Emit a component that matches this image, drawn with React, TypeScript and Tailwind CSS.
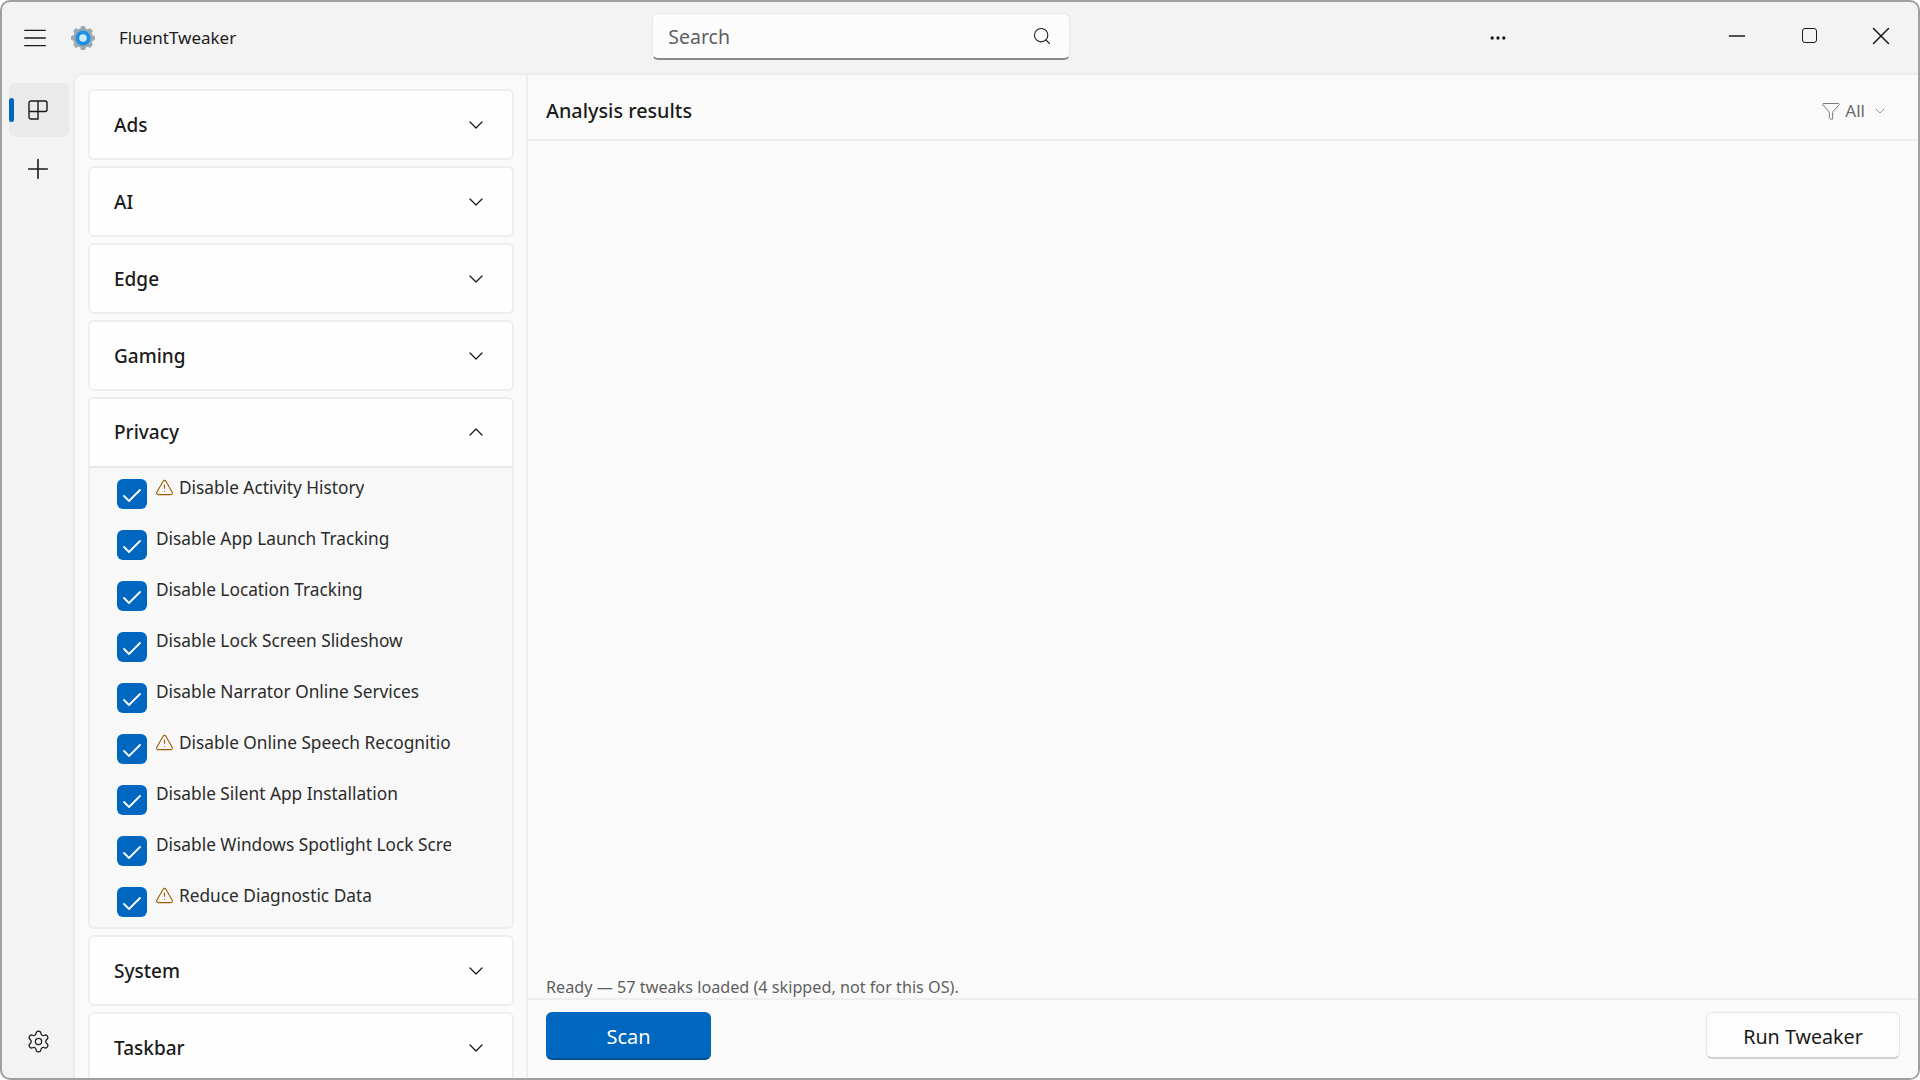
import React from "react";
import { ChevronDown, ChevronUp, Search, Settings, Plus, X, Minus, Ellipsis, Funnel, TriangleAlert, Check } from "lucide-react";

const font = "font-['Noto_Sans','Open_Sans',sans-serif]";

function Card({ title }: { title: string }) {
  return (
    <div className="flex h-[71px] shrink-0 items-center justify-between rounded-md border-2 border-[#eeeeee] bg-[#fefefe] pl-[24px] pr-[24px]">
      <span className="mt-[2px] text-[19px] font-medium leading-none text-[#1b1b1b]">{title}</span>
      <ChevronDown size={24} strokeWidth={1.3} className="text-[#1b1b1b]" />
    </div>
  );
}

function Row({ text, warn }: { text: string; warn?: boolean }) {
  return (
    <div className="flex h-[31px] shrink-0 items-start">
      <div className="mt-[1px] flex h-[30px] w-[30px] shrink-0 items-center justify-center rounded-[6px] bg-[#0067c0]">
        <Check size={24} strokeWidth={1.8} className="mt-[3px] text-white" />
      </div>
      {warn && <TriangleAlert size={19} strokeWidth={1.4} className="ml-[8px] shrink-0 text-[#9d5d00]" />}
      <span className={`${warn ? "ml-[5px]" : "ml-[9px]"} overflow-hidden whitespace-nowrap text-[17.3px] leading-[20px] text-[#2b2b2b]`}>{text}</span>
    </div>
  );
}

function Logo() {
  return (
    <svg width="26" height="26" viewBox="0 0 26 26">
      <circle cx="13" cy="13" r="10" fill="#9aa8b0" />
      {[0, 45, 90, 135].map((a) => (
        <rect key={a} x="10.5" y="1" width="5" height="24" rx="1.5" fill="#9aa8b0" transform={`rotate(${a} 13 13)`} />
      ))}
      <circle cx="13" cy="13" r="7.5" fill="#1b8fe6" />
      <circle cx="13" cy="13" r="3.8" fill="#cfeafa" />
    </svg>
  );
}

function MenuIcon() {
  return (
    <svg width="22" height="18" viewBox="0 0 22 18" stroke="#1b1b1b" strokeWidth="1.3" strokeLinecap="round" className="ml-[22px]">
      <path d="M.7 1.3h20.6M.7 9h20.6M.7 16.7h20.6" />
    </svg>
  );
}

function PanelIcon() {
  return (
    <svg width="20" height="20" viewBox="0 0 20 20" fill="none" stroke="#1b1b1b" strokeWidth="1.4" className="mr-[2px]">
      <path d="M1 3a2 2 0 0 1 2-2h7v10.5H1zM10 1h7a2 2 0 0 1 2 2v6.5a2 2 0 0 1-2 2h-7M1 11.5h9V19H3a2 2 0 0 1-2-2z" />
    </svg>
  );
}

export default function App() {
  return (
    <div className={`${font} h-screen w-screen overflow-hidden bg-white`}>
      <div className="flex h-full flex-col overflow-hidden rounded-[10px] border-2 border-[#a0a0a0] bg-[#f3f3f3]">
        <header className="flex h-[71px] shrink-0 items-center">
          <MenuIcon />
          <div className="ml-[24px]"><Logo /></div>
          <span className="ml-[23px] text-[17px] text-[#1b1b1b]">FluentTweaker</span>
          <div className="ml-[416px] mt-[-3px] flex h-[47px] w-[418px] items-center justify-between rounded-md border border-[#e8e8e8] border-b-2 border-b-[#8a8a8a] bg-[#fcfcfc] pl-[15px] pr-[17px]">
            <span className="pt-[2px] text-[19.5px] text-[#5f5f5f]">Search</span>
            <Search size={20} strokeWidth={1.3} className="text-[#1b1b1b]" />
          </div>
          <Ellipsis size={20} strokeWidth={2} className="ml-[418px] text-[#1b1b1b]" />
          <div className="ml-auto mr-[1px] mt-[-4px] flex">
            <div className="flex h-[36px] w-[72px] items-center justify-center"><Minus size={26} strokeWidth={1.3} className="text-[#1b1b1b]" /></div>
            <div className="flex h-[36px] w-[72px] items-center justify-center"><div className="h-[15px] w-[15px] rounded-[3px] border-[1.5px] border-[#1b1b1b]" /></div>
            <div className="flex h-[36px] w-[72px] items-center justify-center"><X size={30} strokeWidth={1.2} className="text-[#1b1b1b]" /></div>
          </div>
        </header>
        <div className="flex min-h-0 flex-1">
          <nav className="flex w-[71px] shrink-0 flex-col pl-[7px] pt-[10px]">
            <div className="relative flex h-[54px] w-[60px] items-center justify-center rounded-md bg-[#eaeaea]">
              <div className="absolute left-0 top-[15px] h-[24px] w-[5px] rounded-full bg-[#0067c0]" />
              <PanelIcon />
            </div>
            <div className="mt-[5px] flex h-[54px] w-[60px] items-center justify-center pr-[2px]">
              <Plus size={32} strokeWidth={1.2} className="text-[#1b1b1b]" />
            </div>
            <div className="mb-[24px] mt-auto flex w-[60px] justify-center pr-[2px]">
              <Settings size={25} strokeWidth={1.2} className="text-[#1b1b1b]" />
            </div>
          </nav>
          <main className="flex min-w-0 flex-1 overflow-hidden rounded-tl-[10px] border-l-2 border-t-2 border-[#ececec] bg-[#fafafa]">
            <aside className="flex w-[453px] shrink-0 flex-col gap-[6px] overflow-hidden border-r-2 border-[#eeeeee] pl-[13px] pr-[12px] pt-[14px]">
              <Card title="Ads" />
              <Card title="AI" />
              <Card title="Edge" />
              <Card title="Gaming" />
              <div className="shrink-0 overflow-hidden rounded-md border-2 border-[#eeeeee] bg-[#f8f8f8]">
                <div className="flex h-[69px] items-center justify-between border-b-2 border-[#e8e8e8] bg-[#fefefe] pl-[24px] pr-[24px]">
                  <span className="text-[19px] font-medium leading-none text-[#1b1b1b]">Privacy</span>
                  <ChevronUp size={24} strokeWidth={1.3} className="mt-[-1px] text-[#1b1b1b]" />
                </div>
                <div className="flex flex-col gap-[20px] pb-[10px] pl-[27px] pr-[61px] pt-[10px]">
                  <Row warn text="Disable Activity History" />
                  <Row text="Disable App Launch Tracking" />
                  <Row text="Disable Location Tracking" />
                  <Row text="Disable Lock Screen Slideshow" />
                  <Row text="Disable Narrator Online Services" />
                  <Row warn text="Disable Online Speech Recognition" />
                  <Row text="Disable Silent App Installation" />
                  <Row text="Disable Windows Spotlight Lock Screen" />
                  <Row warn text="Reduce Diagnostic Data" />
                </div>
              </div>
              <Card title="System" />
              <Card title="Taskbar" />
            </aside>
            <section className="flex min-w-0 flex-1 flex-col">
              <div className="flex h-[66px] shrink-0 items-center justify-between border-b-2 border-[#eeeeee] pl-[18px] pr-[30px] pt-[7px]">
                <span className="text-[19.8px] font-medium text-[#1b1b1b]">Analysis results</span>
                <div className="flex items-center text-[#6b6b6b]">
                  <Funnel size={20} strokeWidth={1.1} />
                  <span className="ml-[4px] text-[17px]">All</span>
                  <ChevronDown size={16} strokeWidth={1.1} className="ml-[7px]" />
                </div>
              </div>
              <div className="flex flex-1 items-end pl-[18px]">
                <span className="text-[16.2px] leading-[22px] text-[#5f5f5f]">Ready — 57 tweaks loaded (4 skipped, not for this OS).</span>
              </div>
              <div className="flex h-[80px] shrink-0 items-start justify-between border-t-2 border-[#eeeeee] pl-[18px] pr-[18px] pt-[12px]">
                <button className="h-[48px] w-[165px] rounded-md border-b-2 border-[#00508f] bg-[#0067c0] pt-[3px] text-[20px] text-white">Scan</button>
                <button className="h-[47px] w-[194px] rounded-md border border-[#e5e5e5] border-b-2 border-b-[#d0d0d0] bg-[#fdfdfd] pt-[3px] text-[19.7px] text-[#1b1b1b]">Run Tweaker</button>
              </div>
            </section>
          </main>
        </div>
      </div>
    </div>
  );
}
